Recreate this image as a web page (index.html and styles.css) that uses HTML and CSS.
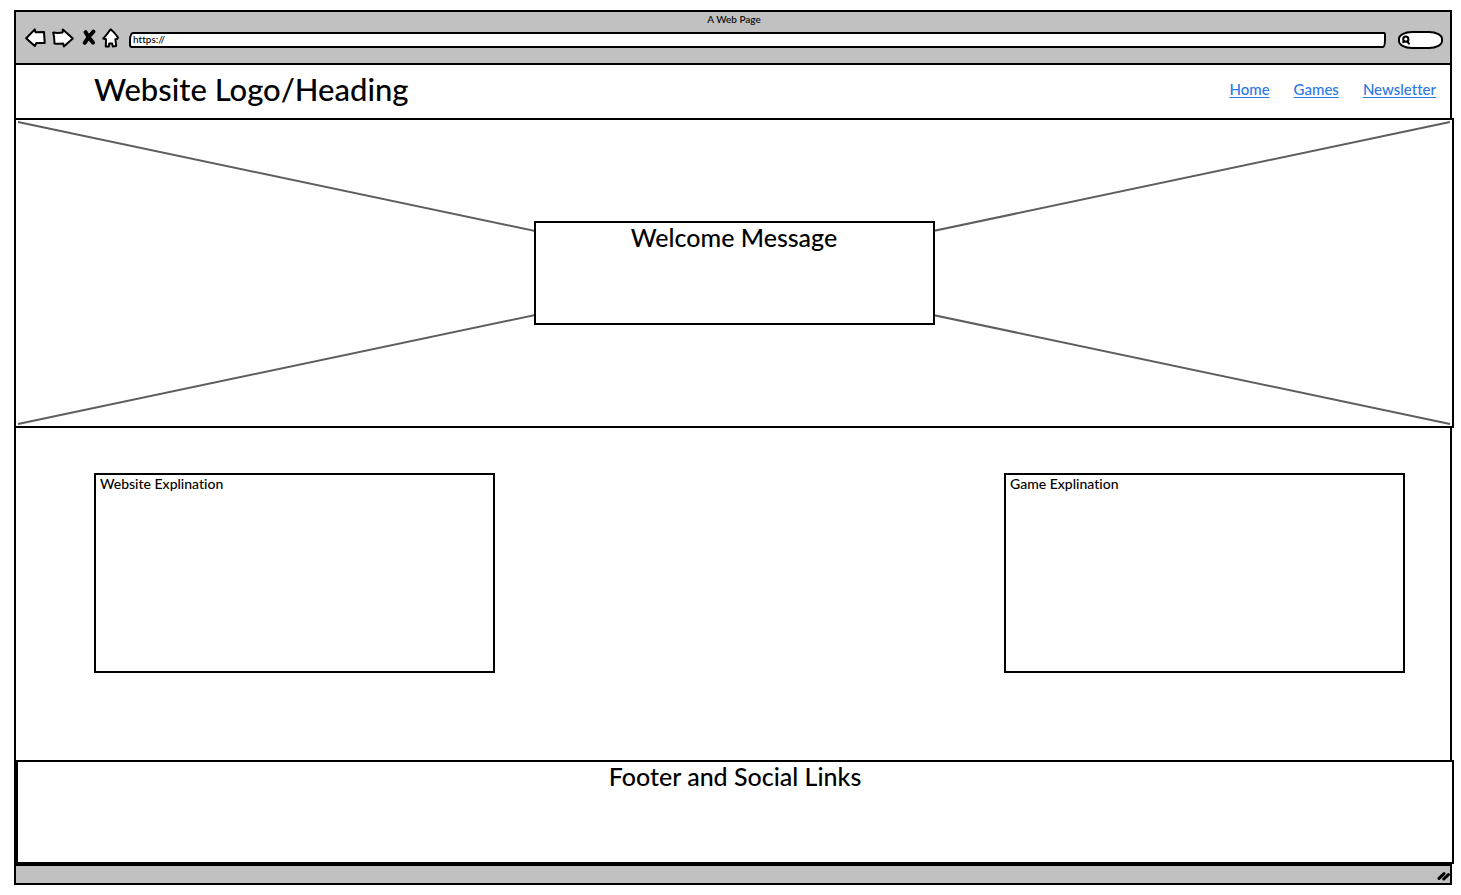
FILE: index.html
```
<!DOCTYPE html>
<html lang="en">
<head>
<meta charset="utf-8">
<title>A Web Page</title>
<link rel="stylesheet" href="styles.css">
</head>
<body>
<div class="window">
  <div class="chrome">
    <div class="chrome-title">A Web Page</div>
    <div class="toolbar">
      <div class="nav-buttons">
        <button type="button" class="icon-button" aria-label="Back">
          <svg class="icon" width="21" height="20" viewBox="0 0 21 20"><path d="M1.2 10.3 9.8 1.4 10.6 4.2 19 3.9 19.7 15 11.4 15 9.8 18Q5 14 1.2 10.3Z"/></svg>
        </button>
        <button type="button" class="icon-button" aria-label="Forward">
          <svg class="icon" width="22" height="20" viewBox="0 0 22 20"><path d="M1.2 4.6Q6 5.3 10.6 4.5L10.8 1.4Q15 5 20.8 10.5L11.8 18.4 11.2 15.6Q6 16 2.4 15.4Q2.6 10 1.2 4.6Z"/></svg>
        </button>
        <button type="button" class="icon-button" aria-label="Stop">
          <svg class="icon icon-stop" width="16" height="20" viewBox="0 0 16 20"><path d="M5.6 4.2Q8.4 10 13 14.6M13.4 3.6Q8 9 4.8 14.8"/></svg>
        </button>
        <button type="button" class="icon-button" aria-label="Home">
          <svg class="icon" width="17" height="20" viewBox="0 0 17 20"><path d="M8.6 1.2Q13 4.6 16 9.6Q15.4 11.4 13.4 11.2L14.2 18 10.8 18.6 10.2 15.6 7.2 15.6 6.8 18.6 3.8 18.4 4 11.2 1.2 10.6Q5 6.4 8.6 1.2Z"/></svg>
        </button>
      </div>
      <div class="fields">
        <input class="address" type="text" value="https://" aria-label="Address">
        <label class="search">
          <svg class="search-icon" width="8" height="10" viewBox="0 0 8 10"><circle cx="3.8" cy="4.2" r="2.6"/><path d="M5.2 6.4 7 8.6M1.2 7.2 2.4 6"/></svg>
          <input class="search-input" type="search" aria-label="Search">
        </label>
      </div>
    </div>
  </div>
  <header class="site-header">
    <h1 class="logo">Website Logo/Heading</h1>
    <nav class="links">
      <a class="link" href="#">Home</a>
      <a class="link" href="#">Games</a>
      <a class="link" href="#">Newsletter</a>
    </nav>
  </header>
  <section class="hero">
    <svg class="hero-cross" viewBox="0 0 100 100" preserveAspectRatio="none" aria-hidden="true"><path d="M0 0 100 100M0 100 100 0"/></svg>
    <div class="welcome"><h2 class="heading">Welcome Message</h2></div>
  </section>
  <main class="content">
    <section class="card"><p class="card-text">Website Explination</p></section>
    <section class="card"><p class="card-text">Game Explination</p></section>
  </main>
  <footer class="site-footer"><h2 class="heading">Footer and Social Links</h2></footer>
  <div class="status-bar">
    <svg class="grip" width="14" height="12" viewBox="0 0 14 12"><path d="M3 9.4 8 4.6M7.8 10 12.4 5.6"/></svg>
  </div>
</div>
</body>
</html>
```
FILE: styles.css
```
* {
  box-sizing: border-box;
}

body {
  margin: 0;
  background: #fff;
  color: #000;
  font-family: Lato, "Open Sans", sans-serif;
  font-weight: 500;
  font-variant-ligatures: none;
}

.window {
  display: flex;
  flex-direction: column;
  min-height: calc(100vh - 20px);
  margin: 10px 9px 10px 14px;
  border: 2px solid #000;
}

.chrome {
  padding: 0 7px 14px 9px;
  background: #c1c1c1;
  border-bottom: 2px solid #000;
}

.chrome-title {
  font-size: 10px;
  line-height: 15px;
  text-align: center;
}

.toolbar {
  display: flex;
  gap: 10px;
}

.nav-buttons {
  display: flex;
  gap: 6px;
}

.icon-button {
  display: block;
  padding: 0;
  border: 0;
  background: none;
}

.icon {
  display: block;
  fill: #fff;
  stroke: #000;
  stroke-width: 2;
  stroke-linejoin: round;
  stroke-linecap: round;
}

.icon-stop {
  fill: none;
  stroke-width: 4;
}

.fields {
  display: flex;
  flex: 1;
  align-items: center;
  gap: 12px;
  padding-top: 4px;
}

.address {
  flex: 1;
  min-width: 0;
  height: 16px;
  padding: 0 2px 2px;
  border: 2px solid #000;
  border-radius: 4px 2px 3px 3px / 8px 3px 8px 3px;
  background: #fff;
  color: #000;
  font: 500 10px Lato, "Open Sans", sans-serif;
  font-variant-ligatures: none;
}

.search {
  display: flex;
  align-items: center;
  width: 45px;
  height: 18px;
  padding-left: 2px;
  border: 2px solid #000;
  border-radius: 14px / 8px;
  background: #fff;
}

.search-icon {
  flex: none;
  fill: none;
  stroke: #000;
  stroke-width: 2;
  stroke-linecap: round;
}

.search-input {
  width: 100%;
  min-width: 0;
  height: 10px;
  padding: 0;
  border: 0;
  background: none;
  font-size: 10px;
}

.site-header {
  display: flex;
  align-items: center;
  justify-content: space-between;
  padding: 4px 14px 9px 78px;
}

.logo {
  margin: 0;
  font-size: 31px;
  font-weight: 500;
  line-height: 40px;
}

.links {
  display: flex;
  gap: 24px;
}

.link {
  color: #2c78e4;
  font-size: 15px;
  line-height: 20px;
  text-underline-offset: 2px;
}

.hero {
  position: relative;
  display: flex;
  align-items: center;
  justify-content: center;
  min-height: 310px;
  margin: 0 -4px 0 -2px;
  border: 2px solid #000;
  background: #fff;
}

.hero-cross {
  position: absolute;
  inset: 2px;
  width: calc(100% - 4px);
  height: calc(100% - 4px);
  overflow: visible;
}

.hero-cross path {
  stroke: #5e5e5e;
  stroke-width: 2;
  vector-effect: non-scaling-stroke;
}

.welcome {
  position: relative;
  width: 401px;
  min-height: 104px;
  border: 2px solid #000;
  background: #fff;
}

.heading {
  margin: 0;
  font-size: 25px;
  font-weight: 500;
  line-height: 28px;
  text-align: center;
}

.content {
  display: flex;
  flex: 1;
  align-items: flex-start;
  justify-content: space-between;
  gap: 24px;
  padding: 45px 45px 45px 78px;
}

.card {
  width: 401px;
  min-height: 200px;
  padding: 0 4px;
  border: 2px solid #000;
}

.card-text {
  margin: 0;
  font-size: 14px;
  line-height: 18px;
}

.site-footer {
  min-height: 104px;
  margin: 0 -4px 0 0;
  border: 2px solid #000;
  background: #fff;
}

.status-bar {
  display: flex;
  align-items: center;
  justify-content: flex-end;
  min-height: 19px;
  border-top: 2px solid #000;
  background: #c1c1c1;
}

.grip {
  fill: none;
  stroke: #000;
  stroke-width: 3;
  stroke-linecap: round;
}
```
